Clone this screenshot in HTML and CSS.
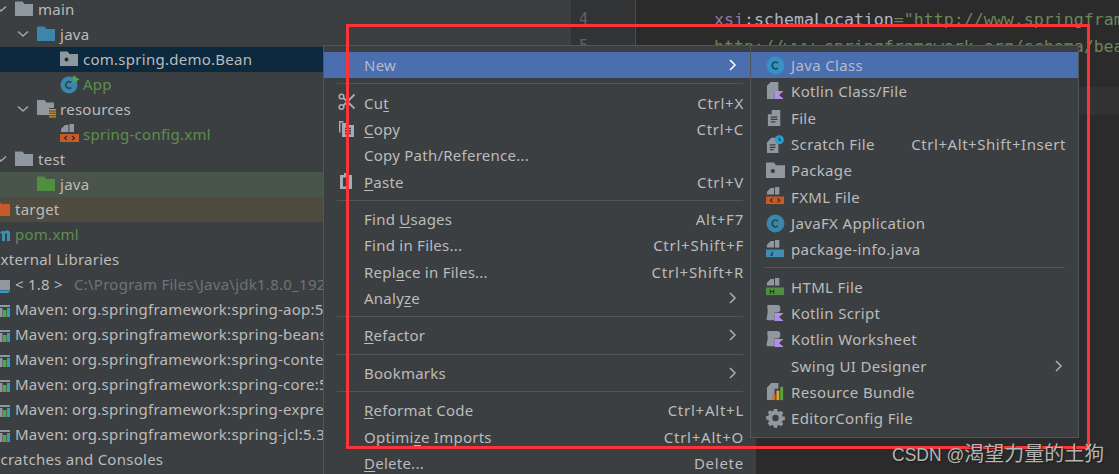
FILE: index.html
```html
<!DOCTYPE html>
<html lang="en">
<head>
<meta charset="utf-8">
<title>IDE context menu</title>
<link rel="stylesheet" href="styles.css">
</head>
<body>
<svg class="defs" width="0" height="0" aria-hidden="true">
  <symbol id="folder" viewBox="0 0 18 18"><path d="M0 1.5h7.5l2 2.5H18v12H0z" fill="currentColor"/></symbol>
  <symbol id="pkg" viewBox="0 0 18 18"><path d="M0 1.5h7.5l2 2.5H18v12H0z" fill="#8f989f"/><circle cx="6.5" cy="9.5" r="2" fill="#1f2a33"/></symbol>
  <symbol id="pkg2" viewBox="0 0 18 18"><path d="M0 1.5h7.5l2 2.5H18v12H0z" fill="#8f989f"/><circle cx="6.5" cy="9.5" r="2" fill="#3c3f41"/></symbol>
  <symbol id="res" viewBox="0 0 20 20"><path d="M0 1h7.5l2 2.5H17V9h-5v7H0z" fill="#8f989f"/><path d="M12 10h7v1.4h-7zM12 12.4h7v1.4h-7zM12 14.800h7v1.400h-7zM12 17.200h7v1.400h-7z" fill="#c99a3c"/></symbol>
  <symbol id="cls" viewBox="0 0 18 18"><circle cx="9" cy="9" r="8.500" fill="currentColor"/><path d="M11.300 6.700A3.200 3.200 0 1 0 11.300 11.300" fill="none" stroke="#26495c" stroke-width="1.700"/></symbol>
  <symbol id="app" viewBox="0 0 20 20"><circle cx="9" cy="11" r="8.500" fill="#3a87ab"/><path d="M11.300 8.700A3.200 3.200 0 1 0 11.300 13.300" fill="none" stroke="#26495c" stroke-width="1.700"/><path d="M13 1l6.500 4.500L13 9z" fill="#4fa83c"/></symbol>
  <symbol id="xml" viewBox="0 0 20 20"><path d="M5 1h3.500v7H1v-3z" fill="#8f989f"/><path d="M9.500 0H14v8H9.500z" fill="#8f989f"/><path d="M0 10h19v8H0z" fill="#c75b27"/><path d="M7 12l-2.500 2L7 16M12 12l2.500 2L12 16" fill="none" stroke="#3c2a20" stroke-width="1.200"/></symbol>
  <symbol id="jinfo" viewBox="0 0 20 20"><path d="M5 1h3.500v7H1v-3z" fill="#8f989f"/><path d="M9.500 0H14v8H9.500z" fill="#8f989f"/><path d="M0 10h19v8H0z" fill="#3d8fb3"/><path d="M6.500 12v3.800H4.500" fill="none" stroke="#1f3d4d" stroke-width="1.300"/></symbol>
  <symbol id="html" viewBox="0 0 20 20"><path d="M5 1h3.500v7H1v-3z" fill="#8f989f"/><path d="M9.500 0H14v8H9.500z" fill="#8f989f"/><path d="M0 10h19v8H0z" fill="#4f8f3f"/><path d="M4.500 12v4.500M8 12v4.500M4.500 14.200H8" fill="none" stroke="#1f3a18" stroke-width="1.200"/></symbol>
  <symbol id="kt" viewBox="0 0 20 20"><path d="M5 0h8v11H9v7H1V4z" fill="#8f989f"/><path d="M9 9.500h9.500l-4.700 4.200 4.700 4.300H9z" fill="#b18fe8"/></symbol>
  <symbol id="kts" viewBox="0 0 20 20"><path d="M2 1h10c2 0 3 1 3 3v3l-2 2H9v8H2c-1.500 0-1.800-1-1.200-3C1.400 12 1.800 10 1.800 8 1.800 5 .8 1 2 1z" fill="#8f989f"/><path d="M9 9.500h9.500l-4.700 4.200 4.700 4.300H9z" fill="#b18fe8"/></symbol>
  <symbol id="file" viewBox="0 0 18 20"><path d="M5.500 1H14v17H1V6z" fill="#8f989f"/><path d="M5 1v4.500H.7z" fill="#3c3f41"/><path d="M4 8.500h7M4 11h7M4 13.500h5" stroke="#3c3f41" stroke-width="1.300" fill="none"/></symbol>
  <symbol id="scratch" viewBox="0 0 20 20"><path d="M5.500 3H13v16H1V8z" fill="#8f989f"/><path d="M4 10.500h6M4 13h6M4 15.500h4" stroke="#3c3f41" stroke-width="1.300" fill="none"/><circle cx="14" cy="5" r="4.800" fill="#2f9bd0"/><path d="M14 2.500V5.500h1.800" stroke="#12384d" stroke-width="1.100" fill="none"/></symbol>
  <symbol id="bundle" viewBox="0 0 20 20"><path d="M5.500 0H13v6H9v12H1V5z" fill="#8f989f"/><path d="M7 12h3v6H7z" fill="#d9682b"/><path d="M11 8h3v10h-3z" fill="#e0a52a"/><path d="M15 4h3v14h-3z" fill="#5aa63c"/></symbol>
  <symbol id="gear" viewBox="0 0 18 18"><path d="M7.300 0h3.400l.5 2.500 1.600.7 2.100-1.400 2.400 2.400-1.400 2.100.7 1.600 2.400.4v3.400l-2.400.5-.7 1.600 1.400 2.100-2.400 2.400-2.100-1.400-1.600.7-.5 2.400H7.300l-.5-2.400-1.600-.7-2.100 1.400L.7 15.300l1.400-2.100-.7-1.600L-1 11.100V7.700l2.400-.4.700-1.600L.7 3.600l2.400-2.400 2.100 1.400 1.600-.7z" transform="translate(1 0) scale(.89)" fill="#8f989f"/><circle cx="9" cy="8.500" r="3" fill="#3c3f41"/></symbol>
  <symbol id="lib" viewBox="0 0 18 18"><path d="M6 5h12v2H6z" fill="#8f989f"/><path d="M7.500 8h3v9h-3z" fill="#8f989f"/><path d="M11 10h3.500v7H11z" fill="#56a83c"/><path d="M15 8h3v9h-3z" fill="#2f9bd0"/></symbol>
  <symbol id="jdk" viewBox="0 0 18 18"><path d="M4 5h14v10H4z" fill="#8f989f"/><path d="M4 15.500h14c0 1.500-1.500 2.500-3 2.500H7c-1.500 0-3-1-3-2.500z" fill="#2f9bd0"/></symbol>
  <symbol id="pom" viewBox="0 0 18 18"><path d="M4 16V6h3l1 2c1-2 3-2.500 4-1.500 1-1 5-2 6 1V16h-3V9c0-1-2-1-2 0v7h-3V9c0-1-3-1-3 0v7z" fill="#3d8fb3"/></symbol>
  <symbol id="cut" viewBox="0 0 18 18"><circle cx="3.500" cy="3.500" r="2.300" fill="none" stroke="#a3adb5" stroke-width="1.600"/><circle cx="3.500" cy="14" r="2.300" fill="none" stroke="#a3adb5" stroke-width="1.600"/><path d="M5.500 5l11 10.500M5.500 12.500L16.500 1.500" stroke="#a3adb5" stroke-width="1.800" fill="none"/></symbol>
  <symbol id="copy" viewBox="0 0 18 18"><path d="M1 1h4.500v1.500H2.500v10H1z" fill="#a3adb5"/><path d="M4 3h4.500v2H16v12H4z" fill="#a3adb5"/><path d="M7 8.500h6M7 11h6M7 13.500h6" stroke="#3c3f41" stroke-width="1.300" fill="none"/></symbol>
  <symbol id="paste" viewBox="0 0 18 18"><path d="M2 3h4V1h4v2h4v14H2z" fill="#a3adb5"/><path d="M5 5.500h6v9H5z" fill="#3c3f41"/></symbol>
  <symbol id="chev" viewBox="0 0 12 12"><path d="M1 3.500l5 4.500 5-4.500" fill="none" stroke="currentColor" stroke-width="1.600"/></symbol>
  <symbol id="arrow" viewBox="0 0 8 12"><path d="M1 1l5 5-5 5" fill="none" stroke="currentColor" stroke-width="1.500"/></symbol>
</svg>

<div class="ide">
  <aside class="tree">
    <div class="tree-inner">
      <div class="row lv2"><span class="slot"><svg class="chev"><use href="#chev"/></svg></span><svg class="ico c-grey"><use href="#folder"/></svg><span>main</span></div>
      <div class="row lv3"><span class="slot"><svg class="chev"><use href="#chev"/></svg></span><svg class="ico c-blue"><use href="#folder"/></svg><span>java</span></div>
      <div class="row lv4 selected"><span class="slot"></span><svg class="ico"><use href="#pkg"/></svg><span>com.spring.demo.Bean</span></div>
      <div class="row lv4 green"><span class="slot"></span><svg class="ico ico-lg"><use href="#app"/></svg><span>App</span></div>
      <div class="row lv3"><span class="slot"><svg class="chev"><use href="#chev"/></svg></span><svg class="ico ico-lg"><use href="#res"/></svg><span>resources</span></div>
      <div class="row lv4 green"><span class="slot"></span><svg class="ico ico-lg"><use href="#xml"/></svg><span>spring-config.xml</span></div>
      <div class="row lv2"><span class="slot"><svg class="chev"><use href="#chev"/></svg></span><svg class="ico c-grey"><use href="#folder"/></svg><span>test</span></div>
      <div class="row lv3 test-row"><span class="slot"></span><svg class="ico c-green"><use href="#folder"/></svg><span>java</span></div>
      <div class="row target-row"><span class="slot"></span><svg class="ico c-orange"><use href="#folder"/></svg><span>target</span></div>
      <div class="row green"><span class="slot"></span><svg class="ico"><use href="#pom"/></svg><span>pom.xml</span></div>
      <div class="row"><span class="slot"></span><span>External Libraries</span></div>
      <div class="row"><span class="slot"></span><svg class="ico"><use href="#jdk"/></svg><span>&lt; 1.8 &gt;</span><span class="path">C:\Program Files\Java\jdk1.8.0_192</span></div>
      <div class="row"><span class="slot"></span><svg class="ico"><use href="#lib"/></svg><span>Maven: org.springframework:spring-aop:5.3.20</span></div>
      <div class="row"><span class="slot"></span><svg class="ico"><use href="#lib"/></svg><span>Maven: org.springframework:spring-beans:5.3.20</span></div>
      <div class="row"><span class="slot"></span><svg class="ico"><use href="#lib"/></svg><span>Maven: org.springframework:spring-context:5.3.20</span></div>
      <div class="row"><span class="slot"></span><svg class="ico"><use href="#lib"/></svg><span>Maven: org.springframework:spring-core:5.3.20</span></div>
      <div class="row"><span class="slot"></span><svg class="ico"><use href="#lib"/></svg><span>Maven: org.springframework:spring-expression:5.3.20</span></div>
      <div class="row"><span class="slot"></span><svg class="ico"><use href="#lib"/></svg><span>Maven: org.springframework:spring-jcl:5.3.20</span></div>
      <div class="row"><span class="slot"></span><span>Scratches and Consoles</span></div>
    </div>
  </aside>
  <div class="middle"></div>
  <div class="gutter"><div class="ln">4</div><div class="ln">5</div></div>
  <main class="editor">
    <div class="code"><span class="purple">xsi</span>:schemaLocation<span class="str">="http://www.springframework.org/schema/beans</span></div>
    <div class="code str">http://www.springframework.org/schema/beans/spring-beans.xsd"&gt;</div>
    <div class="caret-line"></div>
  </main>
</div>

<nav class="menu main-menu">
  <div class="item active"><span class="label">New</span><svg class="arrow white"><use href="#arrow"/></svg></div>
  <div class="sep"></div>
  <div class="item"><svg class="mi"><use href="#cut"/></svg><span class="label">Cu<u>t</u></span><span class="key">Ctrl+X</span></div>
  <div class="item"><svg class="mi"><use href="#copy"/></svg><span class="label"><u>C</u>opy</span><span class="key">Ctrl+C</span></div>
  <div class="item"><span class="label">Copy Path/Reference...</span></div>
  <div class="item"><svg class="mi"><use href="#paste"/></svg><span class="label"><u>P</u>aste</span><span class="key">Ctrl+V</span></div>
  <div class="sep"></div>
  <div class="item"><span class="label">Find <u>U</u>sages</span><span class="key">Alt+F7</span></div>
  <div class="item"><span class="label">Find in Files...</span><span class="key">Ctrl+Shift+F</span></div>
  <div class="item"><span class="label">Repl<u>a</u>ce in Files...</span><span class="key">Ctrl+Shift+R</span></div>
  <div class="item"><span class="label">Analy<u>z</u>e</span><svg class="arrow"><use href="#arrow"/></svg></div>
  <div class="sep"></div>
  <div class="item"><span class="label"><u>R</u>efactor</span><svg class="arrow"><use href="#arrow"/></svg></div>
  <div class="sep"></div>
  <div class="item"><span class="label">Bookmarks</span><svg class="arrow"><use href="#arrow"/></svg></div>
  <div class="sep"></div>
  <div class="item"><span class="label"><u>R</u>eformat Code</span><span class="key">Ctrl+Alt+L</span></div>
  <div class="item"><span class="label">Optimi<u>z</u>e Imports</span><span class="key">Ctrl+Alt+O</span></div>
  <div class="item"><span class="label"><u>D</u>elete...</span><span class="key">Delete</span></div>
</nav>

<nav class="menu sub-menu">
  <div class="item active"><svg class="si c-lblue"><use href="#cls"/></svg><span class="label">Java Class</span></div>
  <div class="item"><svg class="si"><use href="#kt"/></svg><span class="label">Kotlin Class/File</span></div>
  <div class="item"><svg class="si"><use href="#file"/></svg><span class="label">File</span></div>
  <div class="item"><svg class="si"><use href="#scratch"/></svg><span class="label">Scratch File</span><span class="key">Ctrl+Alt+Shift+Insert</span></div>
  <div class="item"><svg class="si"><use href="#pkg2"/></svg><span class="label">Package</span></div>
  <div class="item"><svg class="si"><use href="#xml"/></svg><span class="label">FXML File</span></div>
  <div class="item"><svg class="si c-blue"><use href="#cls"/></svg><span class="label">JavaFX Application</span></div>
  <div class="item"><svg class="si"><use href="#jinfo"/></svg><span class="label">package-info.java</span></div>
  <div class="sep"></div>
  <div class="item"><svg class="si"><use href="#html"/></svg><span class="label">HTML File</span></div>
  <div class="item"><svg class="si"><use href="#kts"/></svg><span class="label">Kotlin Script</span></div>
  <div class="item"><svg class="si"><use href="#kts"/></svg><span class="label">Kotlin Worksheet</span></div>
  <div class="item"><span class="label">Swing UI Designer</span><svg class="arrow"><use href="#arrow"/></svg></div>
  <div class="item"><svg class="si"><use href="#bundle"/></svg><span class="label">Resource Bundle</span></div>
  <div class="item"><svg class="si"><use href="#gear"/></svg><span class="label">EditorConfig File</span></div>
</nav>

<div class="annotation"></div>
<div class="watermark">CSDN @<span class="wm-cjk">渴望力量的土狗</span></div>
</body>
</html>
```

FILE: styles.css
```css
* { box-sizing: border-box; }
html, body { margin: 0; height: 100%; overflow: hidden; background: #3c3f41; }
body {
  position: relative;
  width: 1119px;
  height: 474px;
  font-family: "Noto Sans", "Open Sans", sans-serif;
  font-size: 15px;
  color: #bbbbbb;
}
.defs { position: absolute; }
.ide { display: flex; height: 474px; overflow: hidden; }

.tree { width: 323px; flex: none; overflow: hidden; letter-spacing: .26px; }
.tree-inner { margin: -3px 0 0 -30px; width: 700px; }
.row { display: flex; align-items: center; height: 25px; white-space: nowrap; padding-bottom: 2px; }
.slot { width: 22px; flex: none; display: flex; }
.lv2 { padding-left: 23px; }
.lv3 { padding-left: 45px; }
.lv4 { padding-left: 68px; }
.selected { background: #0d293e; }
.green { color: #5c8f4c; }
.test-row { background: #49544a; }
.target-row { background: #4f4b41; }
.path { margin-left: 11px; color: #6f7376; }
.ico { width: 18px; height: 18px; flex: none; margin-right: 5px; }
.ico-lg { width: 20px; height: 20px; margin-right: 3px; }
.chev { width: 12px; height: 12px; color: #a0a5a8; margin-left: 2px; }
.c-grey { color: #8f989f; }
.c-blue { color: #3a87ab; }
.c-lblue { color: #3592c4; }
.c-green { color: #4f8f3f; }
.c-orange { color: #c75b27; }

.middle { width: 248px; flex: none; background: #3c3f41; }
.gutter {
  width: 65px;
  flex: none;
  background: #313335;
  border-right: 1px solid #4a4c4e;
  padding-top: 6px;
  font-family: "DejaVu Sans Mono", monospace;
  font-size: 15px;
  color: #606366;
}
.ln { height: 27.3px; line-height: 27.3px; padding-left: 8px; }
.editor { flex: 1; min-width: 0; background: #2b2b2b; padding-top: 6px; overflow: hidden; }
.code {
  height: 27.3px;
  line-height: 27.3px;
  padding-left: 78px;
  white-space: nowrap;
  font-family: "DejaVu Sans Mono", monospace;
  font-size: 16.6px;
  color: #a9b7c6;
}
.purple { color: #9876aa; }
.str { color: #6a8759; }
.caret-line { height: 28px; margin-top: 26.65px; background: #323232; }

.menu {
  position: absolute;
  top: 45px;
  background: #3c3f41;
  border: 1px solid #515658;
  padding-top: 6px;
}
.main-menu { left: 323px; width: 433px; height: 440px; border-right: 0; border-bottom: 0; letter-spacing: .25px; }
.sub-menu { left: 750px; width: 329px; height: 393px; letter-spacing: .35px; }
.item {
  display: flex;
  align-items: center;
  height: 26.3px;
  white-space: nowrap;
  padding: 0 13px 0 40px;
  position: relative;
}
.sub-menu .item { padding: 0 12px 0 40px; }
.main-menu .item { padding-right: 12px; }
.active { background: #4b6eaf; color: #b1bccc; }
.label { flex: 1; }
.key { margin-left: 20px; letter-spacing: .55px; }
.main-menu .key { letter-spacing: .75px; }
u { text-underline-offset: 2px; }
.sep { height: 11.2px; display: flex; align-items: center; margin: 0 13px; }
.sep::before { content: ""; flex: 1; height: 1px; background: #515658; }
.mi { position: absolute; left: 14px; top: 4px; width: 18px; height: 18px; }
.si { position: absolute; left: 15px; top: 4px; width: 19px; height: 19px; }
.arrow { width: 8px; height: 12px; color: #a9adb0; margin-right: 3px; }
.white { color: #ffffff; }
.main-menu .arrow { margin-right: 7px; }

.annotation {
  position: absolute;
  left: 346px;
  top: 24px;
  width: 744px;
  height: 425px;
  border: 3px solid #fc3438;
}
.watermark {
  position: absolute;
  left: 892px;
  top: 442px;
  font-family: "Liberation Sans", "Noto Sans CJK SC", sans-serif;
  font-size: 17.5px;
  line-height: 24px;
  color: #b5b5b5;
  text-shadow: 1px 1px 1px #1c1c1c;
  white-space: nowrap;
}
.wm-cjk { font-size: 20px; }
```
